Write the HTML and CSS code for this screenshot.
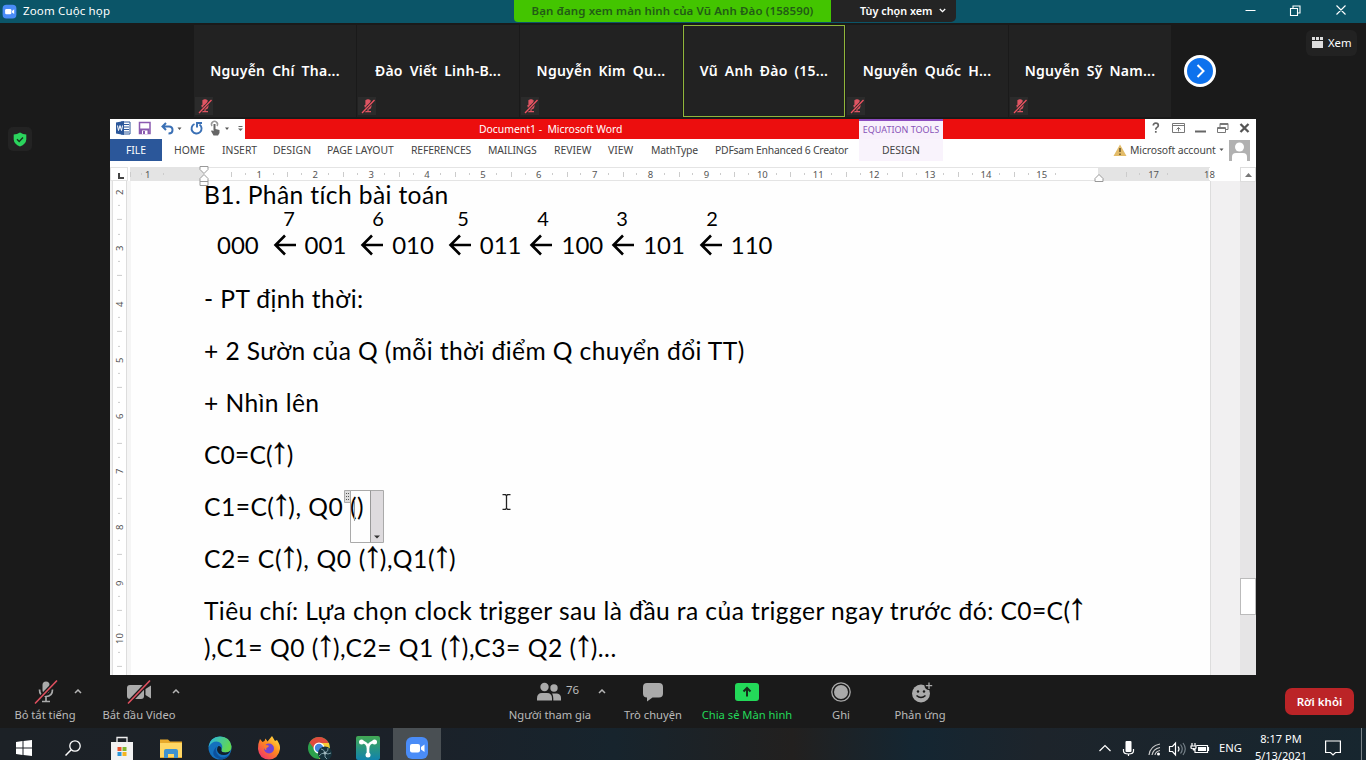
FILE: index.html
```html
<!DOCTYPE html>
<html lang="vi">
<head>
<meta charset="utf-8">
<title>Zoom Cuộc họp</title>
<link rel="stylesheet" href="styles.css">
</head>
<body>
<svg class="defs" width="0" height="0">
  <defs>
    <symbol id="muted" viewBox="0 0 18 18"><rect width="18" height="19" fill="#2b2b2b"/><path d="M8 3.500q2-1.500 4 0v5q-2 2-4 0zM7 8q0 4 3 4t3-4M10 12v2.500M7 14.700h6" fill="#e05563" stroke="#e05563" stroke-width="1.200"/><path d="M4 16L16.500 3" stroke="#2b2b2b" stroke-width="3"/><path d="M4 16L16.500 3" stroke="#ef5261" stroke-width="1.300"/></symbol>
    <symbol id="camera" viewBox="0 0 24 24"><rect x="1" y="1" width="22" height="22" rx="6" fill="#4a8cf7"/><rect x="5" y="8" width="10" height="8.500" rx="2" fill="#fff"/><path d="M16 11l3.500-2.500v7.500L16 13.500z" fill="#fff"/></symbol>
    <symbol id="leftarrow" viewBox="0 0 24 22"><path d="M12 1.500L2.500 11L12 20.500M2.500 11H23" fill="none" stroke="#000" stroke-width="2.600"/></symbol>
    <symbol id="caret" viewBox="0 0 8 5"><path d="M1 4l3-3 3 3" fill="none" stroke="#b5b5b5" stroke-width="1.500"/></symbol>
  </defs>
</svg>

<header class="titlebar">
  <svg class="app-icon" width="15" height="15"><use href="#camera"/></svg>
  <span class="app-title">Zoom Cuộc họp</span>
  <div class="share-status">Bạn đang xem màn hình của Vũ Anh Đào (158590)</div>
  <div class="view-options">Tùy chọn xem <svg width="7" height="5" viewBox="0 0 7 5"><path d="M.8 1l2.700 2.700L6.200 1" fill="none" stroke="#fff" stroke-width="1.300"/></svg></div>
  <svg class="win-controls" width="120" height="20" viewBox="0 0 120 20"><g fill="none" stroke="#fff" stroke-width="1.100"><path d="M.5 10.500h10M45.500 8.500h7v7h-7zM48 8.500V6h7v7h-2.500M91.500 5.500l9 9M100.500 5.500l-9 9"/></g></svg>
</header>

<section class="gallery">
  <div class="tiles">
    <div class="tile"><span>Nguyễn Chí Tha...</span><svg class="mic"><use href="#muted"/></svg></div>
    <div class="tile"><span>Đào Viết Linh-B...</span><svg class="mic"><use href="#muted"/></svg></div>
    <div class="tile"><span>Nguyễn Kim Qu...</span><svg class="mic"><use href="#muted"/></svg></div>
    <div class="tile active"><span>Vũ Anh Đào (15...</span></div>
    <div class="tile"><span>Nguyễn Quốc H...</span><svg class="mic"><use href="#muted"/></svg></div>
    <div class="tile"><span>Nguyễn Sỹ Nam...</span><svg class="mic"><use href="#muted"/></svg></div>
  </div>
  <svg class="next" width="32" height="32" viewBox="0 0 32 32"><circle cx="16" cy="16" r="14.500" fill="#0e72ed" stroke="#fff" stroke-width="3"/><path d="M13.500 10l6 6-6 6" fill="none" stroke="#fff" stroke-width="2"/></svg>
  <button class="view-btn"><svg width="11" height="11" viewBox="0 0 11 11" fill="#ddd"><path d="M0 0h3v3H0zM4 0h3v3H4zM8 0h3v3H8zM0 4h11v7H0z"/></svg>Xem</button>
</section>

<main class="stage">
  <aside class="side"><div class="shield"><svg width="14" height="15" viewBox="0 0 14 15"><path d="M7 .5q3 2 6.300 2v5Q13 12 7 14.500Q1 12 .7 7.500v-5Q4 2.500 7 .5z" fill="#2bd55d"/><path d="M4 7.300l2.200 2.200L10 5.600" fill="none" stroke="#17351f" stroke-width="1.400"/></svg></div></aside>

  <div class="word">
    <div class="word-title">
      <div class="qat"><svg width="135" height="20" viewBox="0 0 135 20">
        <path d="M11 3h9v12h-9z" fill="#fff" stroke="#2b579a"/><path d="M14 5.500h5M14 8h5M14 10.500h5M14 13h5" stroke="#2b579a"/><path d="M6 3.500l8-1.500v14l-8-1.500z" fill="#2b579a"/><path d="M7.500 6.500l1 5 1.500-5 1.500 5 1-5" fill="none" stroke="#fff"/>
        <path d="M29.500 3.500h10.500v11h-10.500z" fill="#fff" stroke="#8a5ab0" stroke-width="1.500"/><path d="M30 9.500h9.500v5H30z" fill="#8a5ab0"/><path d="M32 11.500h5.500V15H32z" fill="#fff"/><path d="M33 12h2v3h-2z" fill="#8a5ab0"/>
        <path d="M56 4l-3.500 3.500L56 11M53 7.500h6q3.500 0 3.500 3.500t-4 3.500" fill="none" stroke="#3a70b5" stroke-width="2"/><path d="M67.500 8.500h4l-2 2.500zM115 8.500h4l-2 2.500z" fill="#555"/>
        <path d="M84.500 5a5 5 0 1 0 5 .5M87 8.500V4h5" fill="none" stroke="#3a70b5" stroke-width="1.900"/>
        <path d="M102 7a3 3 0 1 1 5 0" fill="none" stroke="#999" stroke-width="1.500"/><path d="M103.500 5h2v5l4 1v3l-1.500 2.500h-4.500L101 12l1-.8 1.500 1z" fill="#666"/>
        <path d="M128.500 7.500h4" stroke="#666"/><path d="M128 9.500h5l-2.500 2.500z" fill="#666"/></svg></div>
      <div class="doc-name">Document1 -&nbsp; Microsoft Word</div>
      <div class="context-title">EQUATION TOOLS</div>
      <div class="red-fill"></div>
      <svg class="word-controls" width="111" height="20" viewBox="0 0 111 20"><path d="M8.300 6.500q0-2.300 2.500-2.300t2.500 2.200q0 1.200-1.300 2t-1.200 2.300M10.800 12v1.800" fill="none" stroke="#666" stroke-width="1.700"/><g fill="none" stroke="#777"><path d="M27.500 4.500h12v9h-12zM27.500 6.500h12M33.500 12.500v-4M31.500 10.500l2-2 2 2" /><path d="M50 12.500h11" stroke="#666" stroke-width="2"/><path d="M72.500 8.500h8v5h-8zM72.500 9.500h8M75 8V4.500h8v6h-2M75 5.500h8"/><path d="M95.500 5l8 8M103.500 5l-8 8" stroke="#555" stroke-width="2.300"/></g></svg>
    </div>

    <nav class="tabs">
      <span class="tab file">FILE</span>
      <span class="tab home">HOME</span><span class="tab insert">INSERT</span><span class="tab design">DESIGN</span><span class="tab layout">PAGE LAYOUT</span><span class="tab refs">REFERENCES</span><span class="tab mail">MAILINGS</span><span class="tab review">REVIEW</span><span class="tab view">VIEW</span><span class="tab math">MathType</span><span class="tab pdf">PDFsam Enhanced 6 Creator</span><span class="tab eq">DESIGN</span>
      <div class="account">
        <svg width="14" height="13" viewBox="0 0 14 13"><path d="M7 .5L13.500 12H.5z" fill="#e3bc69"/><path d="M7 4v4M7 9.500V11" stroke="#554320" stroke-width="1.300"/></svg>
        <span>Microsoft account</span>
        <svg width="5" height="4" viewBox="0 0 5 4"><path d="M.5.500h4L2.500 3z" fill="#555"/></svg>
        <svg class="avatar" width="21" height="21" viewBox="0 0 21 21"><path fill="#b1b1b1" d="M0 0h21v21H0z"/><circle cx="10.500" cy="7" r="4.500" fill="#fff"/><path d="M3 21v-4q0-4 4-4h7q4 0 4 4v4z" fill="#fff"/></svg>
      </div>
    </nav>

    <div class="ruler">
      <div class="tabsel"><svg width="6" height="6"><path d="M1 0v5h5" fill="none" stroke="#444" stroke-width="2"/></svg></div>
      <div class="scale">
        <i class="out">1</i><i class="zero"></i><i>1</i><i>2</i><i>3</i><i>4</i><i>5</i><i>6</i><i>7</i><i>8</i><i>9</i><i>10</i><i>11</i><i>12</i><i>13</i><i>14</i><i>15</i><i class="sixteen"></i><i class="out">17</i><i class="last">18</i>
      </div>
      <svg class="indent-left" width="10" height="20" viewBox="0 0 10 20"><path d="M1 .5h8v3L5 7.500 1 3.500zM1 19.500h8v-7L5 8.500l-4 4zM1 15.500h8" fill="#fff" stroke="#999"/></svg>
      <svg class="indent-right" width="10" height="8" viewBox="0 0 10 8"><path d="M1 7.500h8v-3L5 .5l-4 4z" fill="#fff" stroke="#999"/></svg>
      <div class="scroll-up"><svg width="7" height="4"><path d="M0 4h7L3.500 0z" fill="#777"/></svg></div>
    </div>

    <div class="doc-area">
      <div class="vruler"><i>2</i><i>3</i><i>4</i><i>5</i><i>6</i><i>7</i><i>8</i><i>9</i><i>10</i></div>
      <article class="page">
        <p class="heading">B1. Phân tích bài toán</p>
        <div class="weights"><span>7</span><span>6</span><span>5</span><span>4</span><span>3</span><span>2</span></div>
        <div class="states">
          <span>000</span><svg><use href="#leftarrow"/></svg><span>001</span><svg><use href="#leftarrow"/></svg><span>010</span><svg><use href="#leftarrow"/></svg><span>011</span><svg><use href="#leftarrow"/></svg><span>100</span><svg><use href="#leftarrow"/></svg><span>101</span><svg><use href="#leftarrow"/></svg><span>110</span>
        </div>
        <p class="l1">- PT định thời:</p>
        <p class="l2">+ 2 Sườn của Q (mỗi thời điểm Q chuyển đổi TT)</p>
        <p class="l3">+ Nhìn lên</p>
        <p class="l4">C0=C(<b>↑</b>)</p>
        <p class="l5">C1=C(<b>↑</b>), Q0 <span class="eqbox">()<svg width="40" height="54" viewBox="0 0 40 54"><path d="M6.500 1.500h33v52h-33z" fill="none" stroke="#aaa"/><path d="M27 2h12v51H27z" fill="#dedbde"/><path d="M26.500 1.500v52M10.500 11v21" stroke="#999"/><path d="M.5 1.500h6v12h-6z" fill="#ddd" stroke="#aaa"/><path d="M2 4h1v1H2zM4 4h1v1H4zM2 7h1v1H2zM4 7h1v1H4zM2 10h1v1H2zM4 10h1v1H4z" fill="#555"/><path d="M30 46.500h6l-3 3z" fill="#333"/></svg></span></p>
        <p class="l6">C2= C(<b>↑</b>), Q0 (<b>↑</b>),Q1(<b>↑</b>)</p>
        <p class="l7">Tiêu chí: Lựa chọn clock trigger sau là đầu ra của trigger ngay trước đó: C0=C(<b>↑</b></p>
        <p class="l8">),C1= Q0 (<b>↑</b>),C2= Q1 (<b>↑</b>),C3= Q2 (<b>↑</b>)...</p>
        <svg class="ibeam" width="9" height="16" viewBox="0 0 9 16"><path d="M.5.700h3l1 1 1-1h3M.5 15.300h3l1-1 1 1h3M4.500 1.500v13" fill="none" stroke="#222" stroke-width="1.300"/></svg>
      </article>
      <div class="gutter"></div>
      <div class="scrollbar"><div class="thumb"></div></div>
    </div>
  </div>
</main>

<footer class="controls">
  <div class="ctl mute"><div class="ico"><svg width="26" height="26" viewBox="0 0 26 26"><rect x="9.500" y="2.500" width="7" height="12" rx="3.500" fill="#aaa"/><path d="M6.500 10.500q0 7 6.500 7t6.500-7M13 17.500v4.500M9 22.500h8" fill="none" stroke="#aaa" stroke-width="1.700"/><path d="M2 24.500L24 1.500" stroke="#1a1a1a" stroke-width="4"/><path d="M2 24.500L24 1.500" stroke="#e0505f" stroke-width="1.600"/></svg></div><span>Bỏ tắt tiếng</span></div>
  <svg class="caret c1"><use href="#caret"/></svg>
  <div class="ctl video"><div class="ico"><svg width="26" height="26" viewBox="0 0 26 26"><rect x="1" y="6" width="17" height="14" rx="3" fill="#aaa"/><path d="M19.500 10L25 6.500v13L19.500 16z" fill="#aaa"/><path d="M2 24.500L24 1.500" stroke="#1a1a1a" stroke-width="4"/><path d="M2 24.500L24 1.500" stroke="#e0505f" stroke-width="1.600"/></svg></div><span>Bắt đầu Video</span></div>
  <svg class="caret c2"><use href="#caret"/></svg>
  <div class="ctl people"><div class="ico"><svg width="26" height="20" viewBox="0 0 26 20" fill="#aaa"><circle cx="8.500" cy="5" r="4.200"/><circle cx="18" cy="6" r="3.700"/><path d="M1 18.500v-2q0-5.500 5-5.500h5q5 0 5 5.500v2zM17.300 18.500h7.700v-2.500q0-4-4-4.500h-5q1.500 2 1.300 7z"/></svg><em>76</em></div><span>Người tham gia</span></div>
  <svg class="caret c3"><use href="#caret"/></svg>
  <div class="ctl chat"><div class="ico"><svg width="20" height="20" viewBox="0 0 20 20"><path d="M4 1h12q4 0 4 4v6.500q0 4-4 4H9.500l-5.500 4v-4q-4 0-4-4V5q0-4 4-4z" fill="#aaa"/></svg></div><span>Trò chuyện</span></div>
  <div class="ctl share"><div class="ico"><svg width="24" height="18" viewBox="0 0 24 18"><rect width="24" height="18" rx="3" fill="#23d959"/><path d="M12 13.500V5.500M8.500 8.500L12 5l3.500 3.500" fill="none" stroke="#162b1a" stroke-width="2"/></svg></div><span>Chia sẻ Màn hình</span></div>
  <div class="ctl record"><div class="ico"><svg width="20" height="20" viewBox="0 0 20 20"><circle cx="10" cy="10" r="9.200" fill="none" stroke="#aaa" stroke-width="1.300"/><circle cx="10" cy="10" r="7" fill="#aaa"/></svg></div><span>Ghi</span></div>
  <div class="ctl react"><div class="ico"><svg width="22" height="22" viewBox="0 0 22 22"><circle cx="10" cy="12.500" r="9" fill="#aaa"/><circle cx="7" cy="10.500" r="1.200" fill="#1a1a1a"/><circle cx="13" cy="10.500" r="1.200" fill="#1a1a1a"/><path d="M5.500 14.500q4.500 4 9 0" fill="none" stroke="#1a1a1a" stroke-width="1.500"/><circle cx="18" cy="4.500" r="4.500" fill="#1a1a1a"/><path d="M18 1.500v6.500M14.800 4.700h6.400" stroke="#aaa" stroke-width="1.300"/></svg></div><span>Phản ứng</span></div>
  <button class="leave">Rời khỏi</button>
</footer>

<div class="taskbar">
  <div class="tb"><svg width="16" height="16" viewBox="0 0 16 16" fill="#fff"><path d="M0 2l6.500-1v6.500H0zM7.500.900L16 0v7.500H7.500zM0 8.500h6.500V15L0 14zM7.500 8.500H16V16l-8.500-1z"/></svg></div>
  <div class="tb"><svg width="16" height="16" viewBox="0 0 16 16"><circle cx="10" cy="6" r="5.200" fill="none" stroke="#fff" stroke-width="1.300"/><path d="M6.200 9.800L.5 15.500" stroke="#fff" stroke-width="1.500"/></svg></div>
  <div class="tb"><svg width="24" height="24" viewBox="0 0 24 24"><path d="M7 6V1.500h10V6" fill="none" stroke="#eee" stroke-width="1.300"/><path d="M1 6h22v18H1z" fill="#f2f2f2"/><path d="M7.500 11h4v4h-4z" fill="#e8532c"/><path d="M12.500 11h4v4h-4z" fill="#7fb82d"/><path d="M7.500 16h4v4h-4z" fill="#2b96d8"/><path d="M12.500 16h4v4h-4z" fill="#f4b51e"/></svg></div>
  <div class="tb"><svg width="22" height="20" viewBox="0 0 22 20"><path d="M0 1.500h8l2 2h12V20H0z" fill="#e8aa2c"/><path d="M0 5h22v14H0z" fill="#ffd765"/><path d="M4 20v-7q0-2 2-2h10q2 0 2 2v7h-4v-4H8v4z" fill="#3f92cf"/></svg></div>
  <div class="tb"><svg width="24" height="24" viewBox="0 0 24 24"><defs><linearGradient id="edge" x1="0" y1="0" x2="1" y2=".4"><stop offset="0" stop-color="#28b5e8"/><stop offset="1" stop-color="#62d750"/></linearGradient></defs><circle cx="12" cy="12" r="11.500" fill="#1471bd"/><path d="M.5 11Q2 .5 12 .5t11.500 10q0 6-6 6-5 0-4-3Q16 9 11 6 5 4 .5 11z" fill="url(#edge)"/><path d="M9 10q-3 5 1.500 9.500t12-1.500q-6 8-13.500 4T9 10z" fill="#0c519c"/><path d="M10.500 10q3 0 3 3.500-1 3 4 3 3 0 5-2-2 4.500-6.500 4.500-6 0-7-5 0-3 1.500-4z" fill="#111f2c"/></svg></div>
  <div class="tb"><svg width="24" height="24" viewBox="0 0 24 24"><defs><linearGradient id="fox" x1="1" y1="0" x2=".2" y2="1"><stop offset="0" stop-color="#fff04a"/><stop offset=".5" stop-color="#ff8a1e"/><stop offset="1" stop-color="#f0306d"/></linearGradient></defs><path d="M3 3l2.500 3 2-1 1-2.500 2 3L15 0l3 5 2-1q3.500 5 3 9-1.500 10-11 10.500Q2 23 1 13 1 7 3 3z" fill="url(#fox)"/><circle cx="12" cy="12.500" r="5" fill="#7143d5"/><path d="M7 8.500q1.500 1 4 .8 2 .7-.5 2.200-2 .5-1 2.500-3 0-2.500-5.500z" fill="#ff7b2b"/></svg></div>
  <div class="tb chrome"><svg width="26" height="24" viewBox="0 0 26 24"><circle cx="12" cy="12" r="11" fill="#2ca14c"/><path d="M2.500 6.500Q6 1 12 1t9.500 5.500L20 12l-8-5-4 7z" fill="#df4b3d"/><path d="M12 7h10q3 10-6 15.500L12 23l5-9z" fill="#f7ca35"/><circle cx="12" cy="12" r="5.500" fill="#fff"/><circle cx="12" cy="12" r="4.200" fill="#4285dd"/><circle cx="18" cy="17.500" r="7" fill="#16323c"/><path d="M18 17q-1-4-4-4M18 17q4-2 3-5M18 17q3 2 6 0M18 17q-1 5 2 6M18 17q-4 0-6 3" fill="none" stroke="#7c9da6"/><circle cx="18" cy="17" r="1.500" fill="#a4bbc1"/></svg></div>
  <div class="tb"><svg width="24" height="24" viewBox="0 0 24 24"><defs><linearGradient id="teal" x1="0" y1="0" x2="0" y2="1"><stop offset="0" stop-color="#42a853"/><stop offset="1" stop-color="#1183ad"/></linearGradient></defs><rect width="24" height="24" rx="2" fill="url(#teal)"/><path d="M5 5.500q7 1 7 7 0-6 7-7M12 11v8" fill="none" stroke="#fff" stroke-width="2.700"/><circle cx="5.500" cy="6" r="2.500" fill="#fff"/><circle cx="18.500" cy="6" r="2.500" fill="#fff"/><circle cx="12" cy="19" r="2.500" fill="#fff"/></svg></div>
  <div class="tb active"><svg width="24" height="24"><use href="#camera"/></svg></div>
  <div class="tray">
    <svg width="115" height="20" viewBox="0 0 115 20"><g fill="none" stroke="#fff" stroke-width="1.200"><path d="M1.500 13L7 7.500l5.500 5.500"/><path d="M25.500 11v2q0 3 5 3t5-3v-2M30.500 16v2"/><path d="M51 17q1-9 11-11M54 17q1-6 8-7.500M57 17q.5-3.500 5-4.500" stroke="#ccc"/><path d="M71.500 8.500h3l3-3.500v12l-3-3.500h-3zM80 8.500q2 2.500 0 5"/><path d="M82.500 6.500q3.500 4.500 0 9M85 5q4.500 6 0 12" stroke="#758088"/><path d="M98.500 7.500h11v7H97v-4M110.500 9v4M94 5v3M97 5v3M93 8h5v2q-2.500 2-5 0zM95.500 10v2h2"/></g><rect x="27.500" y="3" width="6" height="11" rx="1" fill="#fff"/><circle cx="60.500" cy="16" r="1.500" fill="#fff"/><path d="M100 9h8v4h-8z" fill="#fff"/></svg>
    <span class="lang">ENG</span>
    <div class="clock"><span>8:17 PM</span><span>5/13/2021</span></div>
    <svg class="notice" width="16" height="16" viewBox="0 0 16 16"><path d="M.600 1h14.800v11.500H10.500l-2.500 2.500-2.500-2.500H.6z" fill="none" stroke="#fff" stroke-width="1.200"/></svg>
    <div class="peek"></div>
  </div>
</div>
</body>
</html>
```
FILE: styles.css
```css
* { box-sizing: border-box; }
body { margin: 0; width: 1366px; height: 760px; overflow: hidden; display: flex; flex-direction: column; background: #1a1a1a; font-family: "Noto Sans", "Open Sans", sans-serif; color: #fff; }
p { margin: 0; }
svg { display: block; flex: none; }
button { border: 0; font: inherit; color: inherit; padding: 0; }
i, em { font-style: normal; }
.defs { position: absolute; }

/* Window title bar */
.titlebar { height: 23px; flex: none; background: #0b5568; display: flex; }
.app-icon { margin: 4px 0 0 2px; }
.app-title { width: 497px; padding-left: 6px; font-size: 11.5px; line-height: 22px; letter-spacing: .15px; }
.share-status { width: 317px; height: 22px; background: #43c500; border-radius: 0 0 0 4px; color: #225c16; font-size: 11.5px; font-weight: 600; line-height: 21px; letter-spacing: .1px; text-align: center; white-space: nowrap; }
.view-options { width: 125px; height: 22px; background: #242424; border-radius: 0 0 5px 0; display: flex; align-items: center; padding-left: 29px; padding-bottom: 1px; gap: 7px; font-size: 10.8px; font-weight: 600; white-space: nowrap; }
.win-controls { margin-left: 289px; }

/* Participant strip */
.gallery { height: 96px; flex: none; display: flex; padding-left: 194px; }
.tiles { display: flex; gap: 1px; padding-top: 2px; }
.tile { width: 162px; height: 92px; background: #222; position: relative; display: flex; align-items: center; justify-content: center; padding-bottom: 2px; font-size: 14px; font-weight: 600; word-spacing: 3px; letter-spacing: .25px; white-space: nowrap; }
.tile.active { border: 1px solid #91b63b; }
.mic { position: absolute; left: 1px; bottom: 2px; width: 18px; height: 18px; }
.next { margin: 32px 0 0 13px; }
.view-btn { margin: 7px 0 0 90px; width: 51px; height: 26px; background: #222; border-radius: 6px; display: flex; align-items: center; padding: 0 0 2px 6px; gap: 5px; font-size: 11.3px; }

/* Shared screen */
.stage { height: 556px; flex: none; display: flex; }
.side { width: 110px; padding: 8px 0 0 8px; }
.shield { width: 24px; height: 24px; background: #232323; border-radius: 5px; display: grid; place-items: center; }
.word { width: 1146px; background: #fff; color: #444; display: flex; flex-direction: column; }
.word-title { height: 20px; display: flex; }
.qat { width: 135px; }
.doc-name { width: 614px; padding-left: 234px; background: #ec0e0e; color: #fff; font-size: 10.4px; line-height: 20px; white-space: nowrap; }
.context-title { width: 84px; background: #f8f0fc; border-top: 2px solid #8c4cc0; color: #8953b8; font-size: 9px; line-height: 18px; text-align: center; white-space: nowrap; }
.red-fill { width: 202px; background: #ec0e0e; }
.tabs { height: 22px; display: flex; font-size: 10.4px; line-height: 22px; }
.tab { white-space: nowrap; }
.file { width: 52px; background: #2b579a; color: #fff; text-align: center; margin-right: 12px; }
.home { width: 48px; } .insert { width: 51px; } .design { width: 54px; } .layout { width: 84px; } .refs { width: 77px; letter-spacing: -.15px; } .mail { width: 66px; letter-spacing: -.15px; } .review { width: 54px; } .view { width: 43px; } .math { width: 64px; letter-spacing: -.2px; } .pdf { width: 144px; letter-spacing: -.22px; }
.eq { width: 84px; background: #f9f3fc; text-align: center; }
.account { margin-left: 170px; display: flex; align-items: center; gap: 3px; letter-spacing: -.1px; white-space: nowrap; }
.avatar { margin-left: 2px; }

.ruler { height: 20px; padding-top: 6px; display: flex; position: relative; }
.tabsel { width: 18px; height: 14px; display: flex; align-items: center; justify-content: center; padding: 3px 0 0 3px; margin-right: 2px; border: 1px solid #e3e3e3; }
.scale { width: 1080px; height: 14px; display: flex; border: solid #e4e4e4; border-width: 1px 0; }
.scale i { flex: none; width: 55.9px; font-size: 9.5px; line-height: 13px; text-align: center; color: #555; background: linear-gradient(#ccc, #ccc) 0 50% / 1px 5px no-repeat, linear-gradient(#ccc, #ccc) 25% 50% / 1px 2px no-repeat, linear-gradient(#ccc, #ccc) 75% 50% / 1px 2px no-repeat; }
.scale .out { background-color: #e4e4e4; }
.scale .out:first-child { width: 45.5px; padding-right: 10px; }
.scale .zero { background: linear-gradient(90deg, #e4e4e4 50%, transparent 50%); }
.scale .sixteen { background: linear-gradient(90deg, transparent 50%, #e4e4e4 50%); }
.scale .last { background: linear-gradient(90deg, #e4e4e4 50%, transparent 50%); }
.indent-left { position: absolute; left: 89px; top: 5px; z-index: 2; }
.indent-right { position: absolute; left: 984px; top: 13px; z-index: 2; }
.scroll-up { margin-left: 30px; width: 16px; height: 15px; border: 1px solid #ddd; display: grid; place-items: center; }

.doc-area { height: 494px; display: flex; overflow: hidden; }
.vruler { width: 21px; padding: 0 4px 0 2px; background: linear-gradient(90deg, #f3f3f3 2px, #e0e0e0 2px 3px, #fff 3px 16px, #ddd 16px 17px, #f5f5f5 17px); overflow: hidden; }
.vruler i { display: grid; place-items: center; writing-mode: vertical-rl; transform: rotate(180deg); height: 55.9px; width: 15px; font-size: 9.5px; color: #555; background: linear-gradient(#ccc, #ccc) 50% 0 / 5px 1px no-repeat, linear-gradient(#ccc, #ccc) 50% 25% / 2px 1px no-repeat, linear-gradient(#ccc, #ccc) 50% 75% / 2px 1px no-repeat; }
.vruler i:first-child { margin-top: -17px; }
.page { position: relative; width: 1079px; padding-left: 73px; background: #fefefe; color: #000; font-family: Lato, "Noto Sans", sans-serif; font-size: 24px; font-variant-ligatures: none; }
.page p { height: 37px; line-height: 37px; margin-bottom: 15px; white-space: pre; font-size: 24.6px; letter-spacing: .41px; }
.page .heading { height: 26px; line-height: 27px; margin: 0; letter-spacing: .38px; }
.weights { height: 23px; display: flex; font-size: 20px; line-height: 23px; padding-left: 68px; }
.weights span { width: 20px; text-align: center; margin-left: 7px; }
.weights span:nth-child(2) { margin-left: 69px; }
.weights span:nth-child(3) { margin-left: 65px; }
.weights span:nth-child(4) { margin-left: 60px; }
.weights span:nth-child(5) { margin-left: 59px; }
.weights span:nth-child(6) { margin-left: 70px; }
.states { height: 30px; margin-bottom: 20px; padding-left: 13px; display: flex; align-items: center; }
.states span { width: 56.1px; line-height: 30px; }
.states span:nth-of-type(4), .states span:nth-of-type(5) { width: 50.2px; }
.states svg { width: 24px; height: 22px; margin: 0 8px 0 -.5px; }
.page b { display: inline-block; width: 14px; height: 37px; font: 24px/33px "Noto Sans Math", "Liberation Sans", sans-serif; letter-spacing: 0; vertical-align: top; text-align: center; -webkit-text-stroke: .2px #000; }
.page .l4 { letter-spacing: .15px; }
.page .l5 { letter-spacing: .48px; }
.page .l6 { letter-spacing: .64px; }
.page .l7 { margin-bottom: 0; }
.page .l8 { letter-spacing: .53px; }
.eqbox { position: relative; }
.eqbox svg { position: absolute; left: -6px; top: -3px; }
.ibeam { position: absolute; left: 371px; top: 313px; }
.gutter { width: 30px; background: #f1f0f1; border-left: 1px solid #ddd; }
.scrollbar { width: 16px; background: #e6e5e6; padding-top: 397px; }
.thumb { height: 37px; background: #fff; border: 1px solid #bbb; }

/* Meeting controls */
.controls { height: 53px; flex: none; display: flex; position: relative; font-size: 11.2px; color: #bbb; }
.ctl { display: flex; flex-direction: column; align-items: center; white-space: nowrap; }
.ctl .ico { height: 32px; padding-top: 1px; display: flex; align-items: center; }
.ctl > span { line-height: 15px; }
.mute { width: 64px; margin-left: 13px; }
.mute svg { margin-left: 2px; }
.video { width: 80px; margin-left: 17px; }
.people { width: 90px; margin-left: 325px; }
.people svg { margin-left: 15px; }
.people em { margin: -5px 0 0 4px; font-size: 11.5px; }
.chat { width: 64px; margin-left: 15px; }
.share { width: 96px; margin-left: 14px; color: #23d959; }
.record { width: 40px; margin-left: 26px; }
.react { width: 60px; margin-left: 29px; }
.react svg { margin-left: 3px; }
.caret { width: 8px; height: 5px; margin-top: 14px; }
.c1 { margin-left: -3px; }
.c2 { margin-left: -7px; }
.c3 { margin-left: 3px; }
.leave { margin: 13px 12px 0 auto; width: 69px; height: 27px; border-radius: 7px; background: #bb2427; color: #fff; font-weight: 600; font-size: 11.5px; line-height: 25px; }

/* Windows taskbar */
.taskbar { height: 32px; flex: none; display: flex; overflow: hidden; background: linear-gradient(90deg, #1c2126, #1b2129 30%, #17242d 45%, #22201f 58%, #142632 67%, #1d242b 76%, #17262f); }
.tb { width: 48px; height: 40px; margin-right: 1.1px; display: flex; align-items: center; justify-content: center; }
.chrome { padding-left: 2px; }
.tb.active { background: #494f53; }
.tray { margin-left: auto; display: flex; height: 40px; align-items: center; font-size: 11.2px; }
.lang { margin-left: 6px; width: 25px; line-height: 17px; padding-bottom: 1px; }
.clock { width: 56px; margin-left: 9px; display: flex; flex-direction: column; align-items: center; white-space: nowrap; line-height: 17px; padding-bottom: 2px; font-size: 11px; }
.notice { margin-left: 16px; }
.peek { width: 1px; height: 40px; margin: 0 4px 0 20px; background: #7a8388; }
```
